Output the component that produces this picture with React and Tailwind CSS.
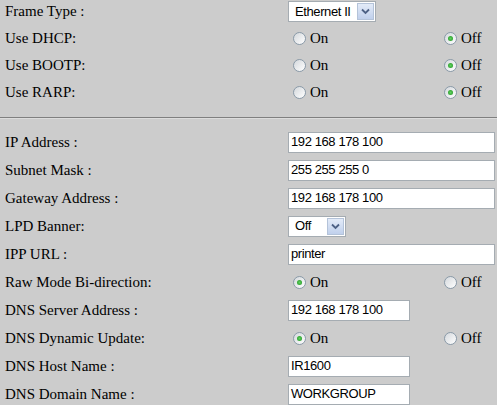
import React from "react";

const serif = { fontFamily: '"Liberation Serif", "Times New Roman", serif' };
const sans = { fontFamily: '"Liberation Sans", Arial, sans-serif' };

function Radio({ checked }) {
  return (
    <span className="relative inline-flex h-[13px] w-[13px] shrink-0 items-center justify-center rounded-full border border-[#8a9aa8] bg-gradient-to-br from-[#d4d8dc] to-[#ffffff]">
      {checked && (
        <span className="h-[5px] w-[5px] rounded-full bg-[radial-gradient(circle,#5fd35f,#1f8f1f)]" />
      )}
    </span>
  );
}

function RadioPair({ on }) {
  return (
    <div className="flex items-center text-[15px] text-black" style={serif}>
      <div className="flex w-[156px] items-center pl-[5px]">
        <Radio checked={on} />
        <span className="ml-[4px]">On</span>
      </div>
      <div className="flex items-center">
        <Radio checked={!on} />
        <span className="ml-[4px]">Off</span>
      </div>
    </div>
  );
}

function Chevron() {
  return (
    <span className="flex h-[17px] w-[17px] items-center justify-center border border-[#b4c3d9] bg-gradient-to-b from-[#e3ebf8] to-[#c0d0ec]">
      <svg width="9" height="7" viewBox="0 0 9 7">
        <path d="M1 1.5 L4.5 5 L8 1.5" fill="none" stroke="#4d6185" strokeWidth="1.8" />
      </svg>
    </span>
  );
}

function Select({ value, width }) {
  return (
    <div
      className={`flex h-[21px] items-center justify-between border border-[#a5acb2] bg-white pl-[6px] pr-[1px] text-[13px] tracking-[-0.4px] text-black ${width}`}
      style={sans}
    >
      <span>{value}</span>
      <Chevron />
    </div>
  );
}

function Input({ value, width }) {
  return (
    <div
      className={`flex h-[21px] items-center border border-[#a5acb2] bg-white pl-[2px] text-[13px] tracking-[-0.4px] text-black ${width}`}
      style={sans}
    >
      {value}
    </div>
  );
}

function Row({ label, children, h }) {
  return (
    <div className={`flex items-center ${h}`}>
      <div className="w-[288px] shrink-0 pl-[5px] text-[15px] text-black" style={serif}>
        {label}
      </div>
      <div className="flex-1">{children}</div>
    </div>
  );
}

export default function App() {
  return (
    <div className="h-[405px] w-[497px] overflow-hidden bg-[#cccccc]">
      <div className="flex flex-col">
        <Row label="Frame Type :" h="h-[23px]">
          <Select value="Ethernet II" width="w-[88px]" />
        </Row>
        <Row label="Use DHCP:" h="h-[27px] mt-[2px]">
          <RadioPair on={false} />
        </Row>
        <Row label="Use BOOTP:" h="h-[27px]">
          <RadioPair on={false} />
        </Row>
        <Row label="Use RARP:" h="h-[27px]">
          <RadioPair on={false} />
        </Row>
      </div>
      <div className="mt-[11px] h-[2px] border-t border-[#7f7f7f] bg-[#dcdcdc]" />
      <div className="mt-[9px] flex flex-col">
        <Row label="IP Address :" h="h-[28px]">
          <Input value="192 168 178 100" width="w-[207px]" />
        </Row>
        <Row label="Subnet Mask :" h="h-[28px]">
          <Input value="255 255 255 0" width="w-[207px]" />
        </Row>
        <Row label="Gateway Address :" h="h-[28px]">
          <Input value="192 168 178 100" width="w-[207px]" />
        </Row>
        <Row label="LPD Banner:" h="h-[28px]">
          <Select value="Off" width="w-[58px]" />
        </Row>
        <Row label="IPP URL :" h="h-[28px]">
          <Input value="printer" width="w-[207px]" />
        </Row>
        <Row label="Raw Mode Bi-direction:" h="h-[28px]">
          <RadioPair on={true} />
        </Row>
        <Row label="DNS Server Address :" h="h-[28px]">
          <Input value="192 168 178 100" width="w-[122px]" />
        </Row>
        <Row label="DNS Dynamic Update:" h="h-[28px]">
          <RadioPair on={true} />
        </Row>
        <Row label="DNS Host Name :" h="h-[28px]">
          <Input value="IR1600" width="w-[122px]" />
        </Row>
        <Row label="DNS Domain Name :" h="h-[28px]">
          <Input value="WORKGROUP" width="w-[122px]" />
        </Row>
      </div>
    </div>
  );
}
